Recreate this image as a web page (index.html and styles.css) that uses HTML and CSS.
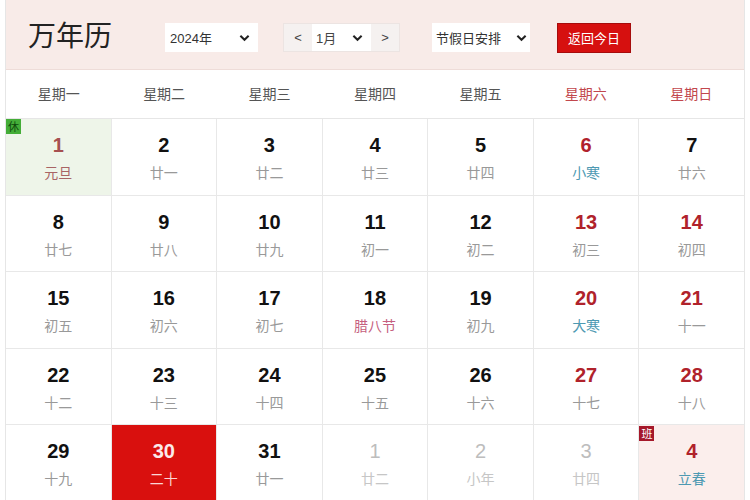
FILE: index.html
```html
<!DOCTYPE html>
<html lang="zh">
<head>
<meta charset="utf-8">
<link rel="stylesheet" href="styles.css">
</head>
<body>
<div class="page">
  <header class="top">
    <h1 class="title">万年历</h1>
    <div class="sel year"><span>2024年</span><svg class="chev" viewBox="0 0 12 8"><path d="M1.5 1.5 L6 6 L10.5 1.5" /></svg></div>
    <div class="month">
      <span class="arrow">&lt;</span>
      <div class="mid"><span>1月</span><svg class="chev" viewBox="0 0 12 8"><path d="M1.5 1.5 L6 6 L10.5 1.5" /></svg></div>
      <span class="arrow">&gt;</span>
    </div>
    <div class="sel holiday"><span>节假日安排</span><svg class="chev" viewBox="0 0 12 8"><path d="M1.5 1.5 L6 6 L10.5 1.5" /></svg></div>
    <button class="today">返回今日</button>
  </header>
  <div class="weekdays">
    <div>星期一</div><div>星期二</div><div>星期三</div><div>星期四</div><div>星期五</div><div class="we">星期六</div><div class="we">星期日</div>
  </div>
  <div class="grid">
    <div class="cell rest"><span class="badge xiu">休</span><b class="hol">1</b><i class="holtxt">元旦</i></div>
    <div class="cell"><b>2</b><i>廿一</i></div>
    <div class="cell"><b>3</b><i>廿二</i></div>
    <div class="cell"><b>4</b><i>廿三</i></div>
    <div class="cell"><b>5</b><i>廿四</i></div>
    <div class="cell wk"><b>6</b><i class="term">小寒</i></div>
    <div class="cell"><b>7</b><i>廿六</i></div>

    <div class="cell"><b>8</b><i>廿七</i></div>
    <div class="cell"><b>9</b><i>廿八</i></div>
    <div class="cell"><b>10</b><i>廿九</i></div>
    <div class="cell"><b>11</b><i>初一</i></div>
    <div class="cell"><b>12</b><i>初二</i></div>
    <div class="cell wk"><b>13</b><i>初三</i></div>
    <div class="cell wk"><b>14</b><i>初四</i></div>

    <div class="cell"><b>15</b><i>初五</i></div>
    <div class="cell"><b>16</b><i>初六</i></div>
    <div class="cell"><b>17</b><i>初七</i></div>
    <div class="cell"><b>18</b><i class="fest">腊八节</i></div>
    <div class="cell"><b>19</b><i>初九</i></div>
    <div class="cell wk"><b>20</b><i class="term">大寒</i></div>
    <div class="cell wk"><b>21</b><i>十一</i></div>

    <div class="cell"><b>22</b><i>十二</i></div>
    <div class="cell"><b>23</b><i>十三</i></div>
    <div class="cell"><b>24</b><i>十四</i></div>
    <div class="cell"><b>25</b><i>十五</i></div>
    <div class="cell"><b>26</b><i>十六</i></div>
    <div class="cell wk"><b>27</b><i>十七</i></div>
    <div class="cell wk"><b>28</b><i>十八</i></div>

    <div class="cell"><b>29</b><i>十九</i></div>
    <div class="cell sel-day"><b>30</b><i>二十</i></div>
    <div class="cell"><b>31</b><i>廿一</i></div>
    <div class="cell other"><b>1</b><i>廿二</i></div>
    <div class="cell other"><b>2</b><i>小年</i></div>
    <div class="cell other"><b>3</b><i>廿四</i></div>
    <div class="cell work"><span class="badge ban">班</span><b class="hol">4</b><i class="term">立春</i></div>
  </div>
</div>
</body>
</html>
```

FILE: styles.css
```css
html, body {
  margin: 0;
  padding: 0;
  background: #ffffff;
  font-family: "Liberation Sans", "Noto Sans CJK SC", sans-serif;
}
.page {
  margin: 0 5px;
  border-left: 1px solid #e6e6e6;
  border-right: 1px solid #e6e6e6;
  height: 500px;
  overflow: hidden;
}
.top {
  height: 70px;
  background: #f8ebe8;
  display: flex;
  align-items: center;
  padding-left: 22px;
  box-sizing: border-box;
  border-bottom: 1px solid #eedcd8;
}
.title {
  margin: 0 53px 0 0;
  font-family: "Noto Sans CJK SC", sans-serif;
  font-weight: 400;
  font-size: 28px;
  color: #222;
  line-height: 1;
  position: relative;
  top: -1px;
}
.sel {
  height: 29px;
  background: #fff;
  display: flex;
  align-items: center;
  justify-content: space-between;
  box-sizing: border-box;
  padding: 0 8px 0 5px;
  font-size: 13px;
  color: #333;
  font-family: "Liberation Sans", "Noto Sans CJK SC", sans-serif;
  position: relative;
  top: 3px;
}
.year { width: 93px; margin-right: 25px; }
.holiday { width: 98px; margin-right: 26px; padding: 0 3px 0 4px; margin-left: 2px; }
.chev {
  width: 11px;
  height: 8px;
  fill: none;
  stroke: #222;
  stroke-width: 2.2;
}
.month {
  display: flex;
  height: 29px;
  width: 117px;
  background: #f5f1f0;
  border: 1px solid #ece4e2;
  box-sizing: border-box;
  margin-right: 30px;
  font-size: 13px;
  color: #444;
  position: relative;
  top: 3px;
}
.arrow {
  width: 28px;
  display: flex;
  align-items: center;
  justify-content: center;
}
.month .mid {
  flex: 1;
  background: #fff;
  display: flex;
  align-items: center;
  justify-content: space-between;
  padding: 0 8px 0 4px;
}
.today {
  width: 74px;
  height: 30px;
  margin-left: 1px;
  background: #d6100f;
  border: 1px solid #a60c0c;
  color: #fff;
  font-family: "Noto Sans CJK SC", sans-serif;
  font-size: 13px;
  padding: 0;
  position: relative;
  top: 3px;
}
.weekdays {
  display: grid;
  grid-template-columns: repeat(7, 1fr);
  height: 48px;
  align-items: center;
  border-bottom: 1px solid #e6e6e6;
  font-family: "Noto Sans CJK SC", sans-serif;
  font-size: 14px;
  color: #555;
  text-align: center;
}
.weekdays div { position: relative; top: -1px; }
.weekdays .we { color: #c2474d; }
.grid {
  display: grid;
  grid-template-columns: repeat(7, 1fr);
  grid-auto-rows: 75.6px;
  gap: 1px;
  background: #e8e8e8;
}
.cell {
  background: #fff;
  position: relative;
  display: flex;
  flex-direction: column;
  align-items: center;
  padding-top: 14px;
  box-sizing: border-box;
}
.cell b {
  font-family: "Liberation Sans", Arial, sans-serif;
  font-weight: 700;
  font-size: 20px;
  line-height: 24px;
  color: #111;
}
.cell i {
  font-style: normal;
  font-family: "Noto Sans CJK SC", sans-serif;
  font-size: 14px;
  line-height: 18px;
  margin-top: 6px;
  color: #999;
}
.cell.wk b { color: #b0222b; }
.cell .hol { color: #b0222b; }
.cell.rest { background: #eef5e9; }
.cell.rest .hol { color: #a65050; }
.cell .holtxt { color: #a86464; }
.cell .term { color: #4d99b2; }
.cell .fest { color: #c65f80; }
.cell.sel-day { background: #d9100e; }
.cell.sel-day b { color: #fbeaea; }
.cell.sel-day i { color: #fbd6d6; }
.cell.other b { color: #bdbdbd; font-weight: 400; }
.cell.other i { color: #c6c6c6; }
.cell.work { background: #fbeeec; }
.badge {
  position: absolute;
  left: 0;
  top: 0;
  width: 15px;
  height: 15px;
  font-family: "Noto Sans CJK SC", sans-serif;
  font-size: 11px;
  line-height: 15px;
  text-align: center;
}
.xiu { background: #44ad38; color: #0f4a0c; }
.ban { background: #a5182a; color: #fff; top: 1px; }
```
